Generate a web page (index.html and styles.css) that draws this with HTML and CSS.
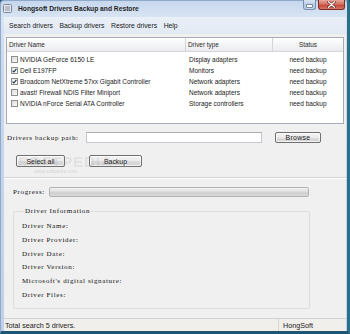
FILE: index.html
```html
<!DOCTYPE html>
<html>
<head>
<meta charset="utf-8">
<link rel="stylesheet" href="styles.css">
</head>
<body>
<div class="window">
  <div class="titlebar">
    <svg class="appicon" width="9" height="9" viewBox="0 0 9 9">
      <rect x="0.5" y="0.5" width="8" height="8" rx="1" fill="#e4e8ee" stroke="#7d8796"/>
      <rect x="2" y="2.5" width="5" height="1" fill="#8a94a3"/>
      <rect x="2" y="4.5" width="5" height="1" fill="#8a94a3"/>
      <rect x="2" y="6.2" width="5" height="0.8" fill="#aab2bd"/>
    </svg>
    <span class="title">Hongsoft Drivers Backup and Restore</span>
    <div class="caption-btns">
      <span class="btn-min"><span class="dash"></span></span>
      <span class="btn-close">
        <svg width="9" height="7" viewBox="0 0 9 7"><path d="M1.5 0.8 L7.5 6.2 M7.5 0.8 L1.5 6.2" stroke="#5a1a14" stroke-width="2.6" stroke-linecap="round"/><path d="M1.5 0.8 L7.5 6.2 M7.5 0.8 L1.5 6.2" stroke="#fff" stroke-width="1.4" stroke-linecap="round"/></svg>
      </span>
    </div>
  </div>
  <div class="client">
    <div class="menubar">
      <span>Search drivers</span>
      <span>Backup drivers</span>
      <span>Restore drivers</span>
      <span>Help</span>
    </div>
    <div class="list">
      <div class="list-head">
        <div class="c-name">Driver Name</div>
        <div class="c-type">Driver type</div>
        <div class="c-status">Status</div>
      </div>
      <div class="list-body">
        <div class="row"><div class="c-name"><span class="cb"></span>NVIDIA GeForce 6150 LE</div><div class="c-type">Display adapters</div><div class="c-status">need backup</div></div>
        <div class="row"><div class="c-name"><span class="cb checked"><svg width="5" height="5" viewBox="0 0 5 5"><path d="M0.6 2.6 L1.9 4 L4.4 0.8" fill="none" stroke="#1d2a44" stroke-width="1.1"/></svg></span>Dell E197FP</div><div class="c-type">Monitors</div><div class="c-status">need backup</div></div>
        <div class="row"><div class="c-name"><span class="cb checked"><svg width="5" height="5" viewBox="0 0 5 5"><path d="M0.6 2.6 L1.9 4 L4.4 0.8" fill="none" stroke="#1d2a44" stroke-width="1.1"/></svg></span>Broadcom NetXtreme 57xx Gigabit Controller</div><div class="c-type">Network adapters</div><div class="c-status">need backup</div></div>
        <div class="row"><div class="c-name"><span class="cb"></span>avast! Firewall NDIS Filter Miniport</div><div class="c-type">Network adapters</div><div class="c-status">need backup</div></div>
        <div class="row"><div class="c-name"><span class="cb"></span>NVIDIA nForce Serial ATA Controller</div><div class="c-type">Storage controllers</div><div class="c-status">need backup</div></div>
      </div>
    </div>
    <div class="path-row">
      <span class="slabel path-label">Drivers backup path:</span>
      <span class="input"></span>
      <span class="button browse">Browse</span>
    </div>
    <div class="btn-row">
      <span class="button select-all">Select all</span>
      <span class="button backup">Backup</span>
      <span class="watermark">SOFTPEDIA</span>
      <span class="watermark-url">www.softpedia.com</span>
    </div>
    <div class="sep"></div>
    <div class="lower">
      <div class="progress-row">
        <span class="slabel">Progress:</span>
        <span class="progress"></span>
      </div>
      <fieldset class="info">
        <legend class="slabel">Driver Information</legend>
        <div class="slabel line">Driver Name:</div>
        <div class="slabel line">Driver Provider:</div>
        <div class="slabel line">Driver Date:</div>
        <div class="slabel line">Driver Version:</div>
        <div class="slabel line">Microsoft's digital signature:</div>
        <div class="slabel line">Driver Files:</div>
      </fieldset>
    </div>
    <div class="statusbar">
      <span class="st-left">Total search 5 drivers.</span>
      <span class="st-right">HongSoft</span>
    </div>
  </div>
</div>
</body>
</html>
```
FILE: styles.css
```css
html, body {
  margin: 0;
  padding: 0;
}
body {
  width: 350px;
  height: 334px;
  overflow: hidden;
  background: #1f5674;
  font-family: "Liberation Sans", Arial, sans-serif;
  color: #1a1a1a;
}
.window {
  box-sizing: border-box;
  width: 350px;
  height: 334px;
  display: flex;
  flex-direction: column;
  background: linear-gradient(to bottom, #c6d7ed 0, #d8e4f3 16px, #c9d9ed 60px, #bed1e8 100%);
  border-top: 1px solid #8ea9c9;
  border-left: 1px solid #8ea9c9;
  border-right: 3px solid #2d6f88;
  border-bottom: 3px solid #1d5573;
  border-radius: 4px 4px 0 0;
  padding: 0 1px 0 3px;
}
.titlebar {
  height: 16px;
  display: flex;
  align-items: center;
  flex-shrink: 0;
}
.appicon {
  margin-left: -1px;
  margin-top: -1px;
  display: block;
}
.title {
  margin-left: 6px;
  font-weight: bold;
  font-size: 6.7px;
  color: #1e1e1e;
  margin-top: -1px;
}
.caption-btns {
  margin-left: auto;
  align-self: flex-start;
  margin-top: -1px;
  margin-right: 1px;
  display: flex;
  gap: 2px;
}
.btn-min, .btn-close {
  box-sizing: border-box;
  height: 10px;
  display: flex;
  align-items: center;
  justify-content: center;
  border-radius: 0 0 3px 3px;
}
.btn-min {
  width: 13px;
  background: linear-gradient(#dbe5f2, #bccde3 50%, #aec3de 51%, #c8d7ea);
  border: 1px solid #7890b0;
  border-top: none;
}
.btn-min .dash {
  width: 5px;
  height: 2px;
  margin-top: 2px;
  background: #fff;
  box-shadow: 0 0 0 0.6px #4d5f78;
}
.btn-close {
  width: 27px;
  background: linear-gradient(#e8a89c, #d26a5c 50%, #c2402f 51%, #d7796a);
  border: 1px solid #7d2d24;
  border-top: none;
}
.client {
  flex: 1;
  display: flex;
  flex-direction: column;
  background: #f0f0f0;
  min-height: 0;
}
.menubar {
  height: 17px;
  display: flex;
  align-items: center;
  gap: 6.6px;
  padding-left: 5px;
  font-size: 6.8px;
  color: #1a1a1a;
  background: linear-gradient(#eaf0f8, #e2e9f3);
  flex-shrink: 0;
}
.list {
  margin: 3px 2px 0 2px;
  height: 87px;
  box-sizing: border-box;
  border: 1px solid #a5acb5;
  background: #fff;
  flex-shrink: 0;
}
.list-head, .row {
  display: grid;
  grid-template-columns: 179px 87px 70px;
}
.list-head {
  height: 14px;
  box-sizing: border-box;
  background: linear-gradient(#ffffff, #f4f5f7 50%, #eaecef);
  border-bottom: 1px solid #d5d5d5;
  font-size: 6.4px;
  color: #2a2a2a;
}
.list-head > div {
  display: flex;
  align-items: center;
  border-right: 1px solid #d5d5d5;
}
.list-head .c-name { padding-left: 2px; }
.list-head .c-type { padding-left: 2px; }
.list-head .c-status { justify-content: center; border-right: none; }
.list-body {
  padding-top: 2px;
  font-size: 6.5px;
  color: #1a1a1a;
}
.row {
  height: 11px;
  align-items: center;
}
.row .c-name {
  display: flex;
  align-items: center;
  padding-left: 4px;
  white-space: nowrap;
}
.row .c-type { padding-left: 3px; white-space: nowrap; }
.row .c-status { text-align: center; }
.cb {
  box-sizing: border-box;
  width: 7px;
  height: 7px;
  margin-right: 2px;
  border: 1px solid #8e8f8f;
  background: linear-gradient(135deg, #dcdcdc, #fafafa);
  display: flex;
  align-items: center;
  justify-content: center;
}
.cb.checked {
  background: linear-gradient(135deg, #e6e6e6, #ffffff);
}
.cb svg { display: block; }
.slabel {
  font-family: "Liberation Serif", "Times New Roman", serif;
  font-size: 7px;
  letter-spacing: 0.65px;
  color: #111;
}
.path-row {
  margin-top: 8px;
  height: 11px;
  display: flex;
  align-items: center;
  padding-left: 3px;
  flex-shrink: 0;
}
.path-label { width: 79px; white-space: nowrap; }
.input {
  box-sizing: border-box;
  width: 176px;
  height: 11px;
  background: #fff;
  border: 1px solid #c5c9cf;
  border-top-color: #abadb3;
}
.button {
  box-sizing: border-box;
  height: 11px;
  display: flex;
  align-items: center;
  justify-content: center;
  font-size: 6.9px;
  color: #1a1a1a;
  border: 1px solid #707070;
  border-radius: 2px;
  background: linear-gradient(#f4f4f4, #ebebeb 50%, #dddddd 51%, #d2d2d2);
  box-shadow: inset 0 0 0 1px rgba(255,255,255,0.7);
}
.browse {
  margin-left: 13px;
  width: 46px;
  letter-spacing: 0.35px;
}
.btn-row {
  position: relative;
  margin-top: 12px;
  height: 12px;
  display: flex;
  padding-left: 12px;
  gap: 24px;
  flex-shrink: 0;
}
.btn-row .button { height: 12px; }
.select-all { width: 49px; }
.backup { width: 53px; }
.watermark {
  position: absolute;
  left: 14px;
  top: -2px;
  font-size: 15px;
  letter-spacing: 1px;
  color: rgba(150,150,150,0.18);
  font-weight: bold;
}
.watermark-url {
  position: absolute;
  left: 30px;
  top: 13px;
  font-size: 5px;
  color: rgba(150,150,150,0.35);
}
.sep {
  margin-top: 10px;
  height: 1px;
  background: #d5d5d5;
  border-bottom: 1px solid #ffffff;
  flex-shrink: 0;
}
.lower {
  padding-left: 9px;
  flex-shrink: 0;
}
.progress-row {
  margin-top: 8px;
  height: 10px;
  display: flex;
  align-items: center;
}
.progress-row .slabel { width: 36px; }
.progress {
  box-sizing: border-box;
  width: 260px;
  height: 10px;
  border: 1px solid #b2b2b2;
  border-radius: 2px;
  background: linear-gradient(#f3f3f3, #e2e2e2 40%, #cfcfcf 60%, #dadada);
}
.info {
  margin: 9px 0 0 0;
  padding: 4px 0 5px 8px;
  width: 297px;
  box-sizing: border-box;
  border: 1px solid #dcdcdc;
  border-radius: 2px;
  min-inline-size: 0;
}
.info legend {
  padding: 0 1px;
  margin-left: 2px;
  line-height: 10px;
}
.info .line {
  height: 13.8px;
  line-height: 13.8px;
  white-space: nowrap;
}
.statusbar {
  margin-top: auto;
  height: 13px;
  box-sizing: border-box;
  display: flex;
  align-items: center;
  background: #f1efeb;
  border-top: 1px solid #d3d3d3;
  font-size: 7.2px;
  color: #1a1a1a;
  flex-shrink: 0;
}
.st-left {
  flex: 1;
  padding-left: 1px;
}
.st-right {
  width: 68px;
  height: 100%;
  display: flex;
  align-items: center;
  padding-left: 4px;
  box-sizing: border-box;
  border-left: 1px solid #d5d5d5;
}
```
